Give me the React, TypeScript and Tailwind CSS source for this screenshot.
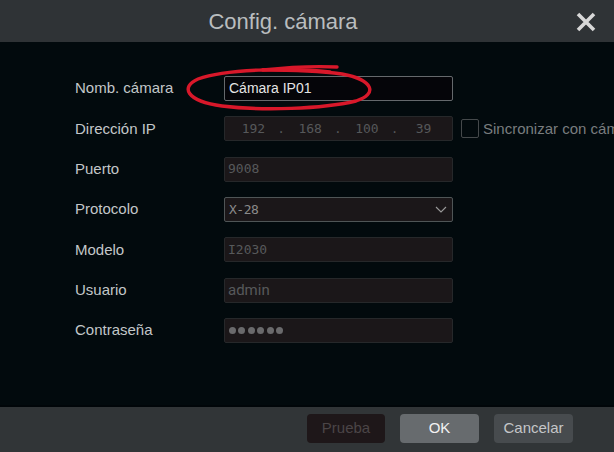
import React from "react";

const font = { fontFamily: '"Liberation Sans", Arial, sans-serif' };

type Row = {
  label: string;
  kind: "name" | "ip" | "text" | "select" | "password";
  value?: string;
  mono?: boolean;
};

const rows: Row[] = [
  { label: "Nomb. cámara", kind: "name", value: "Cámara IP01" },
  { label: "Dirección IP", kind: "ip" },
  { label: "Puerto", kind: "text", value: "9008", mono: true },
  { label: "Protocolo", kind: "select", value: "X-28" },
  { label: "Modelo", kind: "text", value: "I2030", mono: true },
  { label: "Usuario", kind: "text", value: "admin" },
  { label: "Contraseña", kind: "password" },
];

function Field({ row }: { row: Row }) {
  if (row.kind === "name") {
    return (
      <div className="flex h-[25px] w-[229px] shrink-0 items-center rounded-[2px] border border-[#65696c] bg-[#050509] px-[4px] text-[14px] text-[#e4e4e4]">
        {row.value}
      </div>
    );
  }
  if (row.kind === "ip") {
    return (
      <div className="grid h-[25px] w-[229px] shrink-0 grid-cols-4 items-center rounded-[2px] border border-[#26282a] bg-[#1b1719] font-['DejaVu_Sans_Mono',monospace] text-[13px] text-[#56585a]">
        {["192", "168", "100", "39"].map((n, i) => (
          <div key={n} className="relative flex items-center justify-center">
            {n}
            {i < 3 ? (
              <span className="absolute right-[-3px] top-[4px] text-[12px] leading-none">.</span>
            ) : null}
          </div>
        ))}
      </div>
    );
  }
  if (row.kind === "select") {
    return (
      <div className="flex h-[25px] w-[229px] shrink-0 items-center justify-between rounded-[2px] border border-[#4f5556] bg-[#1b1719] pl-[4px] pr-[5px] font-['DejaVu_Sans_Mono',monospace] text-[13px] text-[#8a8a8a]">
        <span className="tracking-[-0.5px]">{row.value}</span>
        <svg width="12" height="7" viewBox="0 0 12 7" fill="none">
          <path d="M1 1l5 5 5-5" stroke="#9a9a9a" strokeWidth="1.1" />
        </svg>
      </div>
    );
  }
  if (row.kind === "password") {
    return (
      <div className="flex h-[25px] w-[229px] shrink-0 items-center gap-[2.4px] rounded-[2px] border border-[#26282a] bg-[#1b1719] pl-[4px]">
        {[0, 1, 2, 3, 4, 5].map((i) => (
          <span key={i} className="h-[7px] w-[7px] rounded-full bg-[#6a6a6c]" />
        ))}
      </div>
    );
  }
  return (
    <div
      className={
        "flex h-[25px] w-[229px] shrink-0 items-center rounded-[2px] border border-[#26282a] bg-[#1b1719] px-[3px] text-[#57595b] " +
        (row.mono ? "font-['DejaVu_Sans_Mono',monospace] text-[13px]" : "text-[15px] font-['Roboto',sans-serif]")
      }
    >
      {row.value}
    </div>
  );
}

export default function App() {
  return (
    <div className="relative flex h-[452px] w-[614px] flex-col overflow-hidden bg-[#020a0d]" style={font}>
      <div className="relative flex h-[42px] shrink-0 items-center justify-center bg-[#2f3336] pr-[48px]">
        <span className="text-[22px] text-[#b9bdbf]">Config. cámara</span>
        <svg className="absolute left-[576px] top-[12px]" width="20" height="20" viewBox="0 0 20 20">
          <path d="M2 2l16 16M18 2L2 18" stroke="#d8d8d8" strokeWidth="3.6" strokeLinecap="butt" />
        </svg>
      </div>

      <div className="flex flex-1 flex-col gap-[15.33px] pl-[75px] pt-[34px]">
        {rows.map((row) => (
          <div key={row.label} className="flex items-center">
            <div className="w-[149px] shrink-0 text-[15px] text-[#c3c7c9]">{row.label}</div>
            <Field row={row} />
            {row.kind === "ip" ? (
              <div className="ml-[8px] flex shrink-0 items-center gap-[4px] whitespace-nowrap">
                <span className="h-[19px] w-[18px] rounded-[2px] border border-[#45494b]" />
                <span className="text-[15px] text-[#797d7f]">Sincronizar con cámara</span>
              </div>
            ) : null}
          </div>
        ))}
      </div>

      <div className="flex h-[47px] shrink-0 items-start justify-end gap-[15px] border-t-2 border-[#010609] bg-[#313537] pr-[41px] pt-[7px]">
        <button className="h-[29px] w-[78px] rounded-[4px] bg-[#1e1719] text-[15px] text-[#4b4547]">Prueba</button>
        <button className="h-[29px] w-[79px] rounded-[4px] bg-[#676b6e] text-[15px] text-[#f2f2f2]">OK</button>
        <button className="h-[29px] w-[79px] rounded-[4px] bg-[#474b4e] text-[15px] text-[#c4c6c8]">Cancelar</button>
      </div>

      <svg className="pointer-events-none absolute left-0 top-0" width="614" height="452" viewBox="0 0 614 452" fill="none">
        <path
          d="M330 72 C 300 68, 228 68, 198 79 C 180 87, 186 101, 222 106 C 262 111, 322 109, 356 101 C 378 94, 374 80, 342 74 C 320 71, 300 70, 262 70"
          stroke="#d8182a"
          strokeWidth="3.4"
          strokeLinecap="round"
        />
        <path d="M263 70 C 290 67, 315 66, 337 67" stroke="#d8182a" strokeWidth="3.4" strokeLinecap="round" />
      </svg>
    </div>
  );
}
